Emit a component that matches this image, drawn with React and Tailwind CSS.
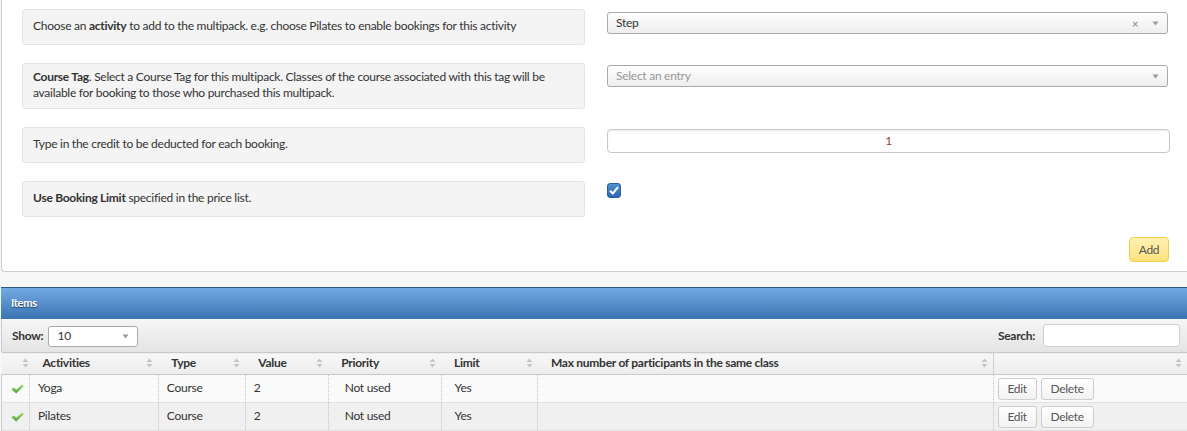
import React from "react";

const font = { fontFamily: "Lato, 'Noto Sans', sans-serif" };

function SortIcon() {
  return (
    <svg width="7" height="10" viewBox="0 0 7 10" className="shrink-0">
      <path d="M3.5 0.5 L6.5 4 L0.5 4 Z" fill="#c4c4c4" />
      <path d="M3.5 9.5 L6.5 6 L0.5 6 Z" fill="#c4c4c4" />
    </svg>
  );
}

function Caret() {
  return (
    <svg width="7" height="5" viewBox="0 0 7 5">
      <path d="M0.5 0.5 L6.5 0.5 L3.5 4.5 Z" fill="#999" />
    </svg>
  );
}

function GreenCheck() {
  return (
    <svg width="13" height="10" viewBox="0 0 13 10">
      <defs>
        <linearGradient id="gc" x1="0" y1="0" x2="0" y2="1">
          <stop offset="0" stopColor="#a2dc72" />
          <stop offset="1" stopColor="#4aa236" />
        </linearGradient>
      </defs>
      <path d="M0.3 5.2 L3 3.4 L5.2 5.8 L11.2 0.4 L12.7 2.2 L5.2 9.6 Z" fill="url(#gc)" />
    </svg>
  );
}

function LabelBox({ children, tall }) {
  return (
    <div
      className={`w-[563px] rounded-[3px] border border-[#e3e3e3] bg-[#f4f4f4] px-[10px] text-[12px] leading-[16px] text-[#333] flex items-center ${tall ? "h-[46px] pb-[2px]" : "h-[36px] pb-[3px]"}`}
    >
      <div>{children}</div>
    </div>
  );
}

const cols = [
  { w: 28, label: "" },
  { w: 129, label: "Activities" },
  { w: 87, label: "Type" },
  { w: 83, label: "Value" },
  { w: 113, label: "Priority" },
  { w: 97, label: "Limit" },
  { w: 456, label: "Max number of participants in the same class" },
  { w: 194, label: "" },
];

const rows = [
  { a: "Yoga", t: "Course", v: "2", p: "Not used", l: "Yes", bg: "bg-[#fafafa]" },
  { a: "Pilates", t: "Course", v: "2", p: "Not used", l: "Yes", bg: "bg-[#f0f0f0]" },
];

function Btn({ children, w }) {
  return (
    <button
      className={`h-[22px] ${w} rounded-[3px] border border-[#cdcdcd] bg-gradient-to-b from-white to-[#f2f2f2] text-[12px] text-[#555]`}
    >
      {children}
    </button>
  );
}

export default function App() {
  return (
    <div className="w-[1187px] h-[431px] overflow-hidden bg-[#f7f7f7] tracking-[-0.27px]" style={font}>
      {/* top form panel */}
      <div className="ml-[1px] w-[1200px] h-[272px] bg-white border-l border-b border-[#cccccc] rounded-bl-[4px]">
        <div className="flex flex-col pl-[20px] pt-[9px]">
          <div className="flex">
            <LabelBox>
              Choose an <b>activity</b> to add to the multipack. e.g. choose Pilates to enable bookings for this activity
            </LabelBox>
            <div className="ml-[22px] mt-[3px] w-[561px] h-[22px] rounded-[3px] border border-[#aaa] bg-gradient-to-b from-white to-[#eeeeee] flex items-center pl-[8px] pr-[8px] text-[12px] text-[#333]">
              <span className="flex-1">Step</span>
              <span className="text-[#999] text-[11px] font-bold mr-[14px] leading-none">×</span>
              <Caret />
            </div>
          </div>
          <div className="flex mt-[18px]">
            <LabelBox tall>
              <b>Course Tag</b>. Select a Course Tag for this multipack. Classes of the course associated with this tag will be available for booking to those who purchased this multipack.
            </LabelBox>
            <div className="ml-[22px] mt-[2px] w-[561px] h-[22px] rounded-[3px] border border-[#aaa] bg-gradient-to-b from-white to-[#eeeeee] flex items-center pl-[8px] pr-[8px] text-[12px] text-[#999]">
              <span className="flex-1">Select an entry</span>
              <Caret />
            </div>
          </div>
          <div className="flex mt-[18px]">
            <LabelBox>Type in the credit to be deducted for each booking.</LabelBox>
            <div className="ml-[22px] mt-[2px] w-[563px] h-[24px] rounded-[4px] border border-[#c8c8c8] bg-white shadow-[inset_0_1px_2px_rgba(0,0,0,0.08)] flex items-center justify-center text-[12px] text-[#8b4a2b]">
              1
            </div>
          </div>
          <div className="flex mt-[18px]">
            <LabelBox>
              <b>Use Booking Limit</b> specified in the price list.
            </LabelBox>
            <div className="ml-[22px] mt-[2px] w-[14px] h-[15px] rounded-[3px] bg-gradient-to-b from-[#4f8fd4] to-[#2c68b0] border border-[#2a5e9e] flex items-center justify-center">
              <svg width="10" height="9" viewBox="0 0 10 9">
                <path d="M1 4.8 L3.8 7.5 L9 1.2" stroke="white" strokeWidth="2" fill="none" />
              </svg>
            </div>
          </div>
          <div className="flex justify-end w-[1147px] mt-[20px]">
            <button className="w-[40px] h-[25px] rounded-[4px] border border-[#f3cd4a] bg-gradient-to-b from-[#fff1b5] to-[#fde27a] text-[12px] text-[#555]">
              Add
            </button>
          </div>
        </div>
      </div>

      {/* items panel */}
      <div className="mt-[15px] ml-[1px] w-[1186px]">
        <div className="h-[32px] border-t border-[#2c5886] bg-gradient-to-b from-[#72abe3] to-[#3a74b1] flex items-center pl-[10px] text-[11px] font-bold text-white [text-shadow:0_1px_1px_#1d3b5c]">
          Items
        </div>
        <div className="h-[33px] bg-gradient-to-b from-[#f6f6f6] to-[#e4e4e4] flex items-center pl-[10px] pr-[7px] text-[12px] font-bold text-[#333] border-l border-[#ccc]">
          <span>Show:</span>
          <div className="ml-[5px] mt-[1px] w-[90px] h-[21px] rounded-[3px] border border-[#aaa] bg-white flex items-center px-[8px] font-normal text-[12px]">
            <span className="flex-1">10</span>
            <Caret />
          </div>
          <div className="flex-1" />
          <span>Search:</span>
          <div className="ml-[8px] w-[137px] h-[23px] rounded-[3px] border border-[#cfcfcf] bg-white" />
        </div>
        <table className="border-collapse table-fixed text-[12px] text-[#333]">
          <colgroup>
            {cols.map((c, i) => (
              <col key={i} style={{ width: c.w }} />
            ))}
          </colgroup>
          <thead>
            <tr className="h-[22px] bg-gradient-to-b from-[#f7f7f7] to-[#ededed] border-t border-b border-[#c8c8c8]">
              {cols.map((c, i) => (
                <th key={i} className={`p-0 pb-[1px] font-bold text-left ${i === 6 ? "border-r border-[#cfcfcf]" : ""}`}>
                  <div className={`flex items-center ${i === 0 ? "justify-center pl-[10px]" : "pl-[13px] pr-[5px]"}`}>
                    <span className="flex-1">{c.label}</span>
                    <SortIcon />
                  </div>
                </th>
              ))}
            </tr>
          </thead>
          <tbody>
            {rows.map((r, idx) => (
              <tr key={idx} className={`h-[28px] ${r.bg} border-b border-[#e2e2e2]`}>
                <td className="p-0 border-l border-[#ccc]">
                  <div className="flex justify-center pl-[5px]"><GreenCheck /></div>
                </td>
                <td className="pl-[8px] pb-[2px] border-l border-dotted border-[#c4c4c4]">{r.a}</td>
                <td className="pl-[8px] pb-[2px] border-l border-dotted border-[#c4c4c4]">{r.t}</td>
                <td className="pl-[8px] pb-[2px] border-l border-dotted border-[#c4c4c4]">{r.v}</td>
                <td className="pl-[16px] pb-[2px] border-l border-dotted border-[#c4c4c4]">{r.p}</td>
                <td className="pl-[13px] pb-[2px] border-l border-dotted border-[#c4c4c4]">{r.l}</td>
                <td className="border-l border-dotted border-[#c4c4c4]"></td>
                <td className="pl-[4px] border-l border-dotted border-[#c4c4c4]">
                  <div className="flex gap-[4px]">
                    <Btn w="w-[39px]">Edit</Btn>
                    <Btn w="w-[53px]">Delete</Btn>
                  </div>
                </td>
              </tr>
            ))}
          </tbody>
        </table>
      </div>
    </div>
  );
}
